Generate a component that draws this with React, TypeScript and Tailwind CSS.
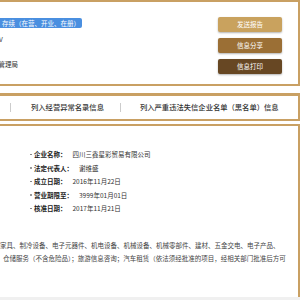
import React from "react";

const gold = "border-[#c9a063]";

export default function App() {
  return (
    <div
      className="w-[300px] h-[300px] overflow-hidden bg-white flex flex-col"
      style={{ fontFamily: '"Noto Sans CJK SC", "Noto Sans", sans-serif' }}
    >
      {/* top panel */}
      <div className={`h-[86px] shrink-0 border-t-2 border-r-2 border-b-2 ${gold} flex justify-between pr-[16px]`}>
        <div className="flex flex-col pt-[16px] text-[6.5px] text-[#333] leading-none">
          <div className="h-[10px] w-[82px] bg-[#4a8fe0] rounded-r-[2px] text-white flex items-center pl-[2px] text-[6.5px]">
            存续（在营、开业、在册）
          </div>
          <div className="mt-[6px] h-[10px] flex items-center overflow-hidden w-[4px]">
            <span className="-ml-[1px]">V</span>
          </div>
          <div className="mt-[15px] h-[10px] flex items-center overflow-hidden w-[20px]">
            <span className="-ml-[1.5px]">管理局</span>
          </div>
        </div>
        <div className="flex flex-col gap-[6px] pt-[15px] w-[64px]">
          <div className="h-[15px] bg-[#c9a25e] rounded-[2px] shadow-[0_1px_2px_rgba(0,0,0,0.3)] text-white text-[6.5px] flex items-center justify-center">
            发送报告
          </div>
          <div className="h-[15px] bg-[#9b6f35] rounded-[2px] shadow-[0_1px_2px_rgba(0,0,0,0.3)] text-white text-[6.5px] flex items-center justify-center">
            信息分享
          </div>
          <div className="h-[15px] bg-[#674723] rounded-[2px] shadow-[0_1px_2px_rgba(0,0,0,0.3)] text-white text-[6.5px] flex items-center justify-center">
            信息打印
          </div>
        </div>
      </div>

      <div className="h-[7px] shrink-0" />

      {/* tab bar */}
      <div className={`h-[28px] shrink-0 border-t-[3px] border-r-2 border-b-2 ${gold} flex items-center text-[7.3px] text-[#333] font-medium`}>
        <span className="ml-[10px] w-px h-[9px] bg-[#ccc]" />
        <span className="ml-[20px]">列入经营异常名录信息</span>
        <span className="ml-[16px] w-px h-[9px] bg-[#ccc]" />
        <span className="ml-[19px]">列入严重违法失信企业名单（黑名单）信息</span>
      </div>

      <div className="h-[3px] shrink-0" />

      {/* info panel */}
      <div className={`h-[173px] shrink-0 border-t-2 border-r-2 ${gold} flex flex-col text-[6.5px] text-[#333] leading-none`}>
        <div className="flex flex-col gap-[7px] pt-[25px] pl-[30px]">
          {[
            ["企业名称：", "四川三鑫星彩贸易有限公司"],
            ["法定代表人：", "谢维盛"],
            ["成立日期：", "2016年11月22日"],
            ["营业期限至：", "3999年01月01日"],
            ["核准日期：", "2017年11月21日"],
          ].map(([k, v]) => (
            <div key={k} className="flex items-center h-[6.5px]">
              <span className="w-[1.5px] h-[1.5px] rounded-full bg-[#777] mr-[2.5px]" />
              <span className="font-bold text-[#222]">{k}</span>
              <span className="ml-[6px]">{v}</span>
            </div>
          ))}
        </div>
        <div className="mt-[30px] flex flex-col gap-[7px] whitespace-nowrap text-[#444]">
          <div>家具、制冷设备、电子元器件、机电设备、机械设备、机械零部件、建材、五金交电、电子产品、</div>
          <div className="ml-[3px]">仓储服务（不含危险品）；旅游信息咨询；汽车租赁（依法须经批准的项目，经相关部门批准后方可</div>
        </div>
      </div>
      <div className="flex-1 bg-[#f0f0f0]" />
    </div>
  );
}
